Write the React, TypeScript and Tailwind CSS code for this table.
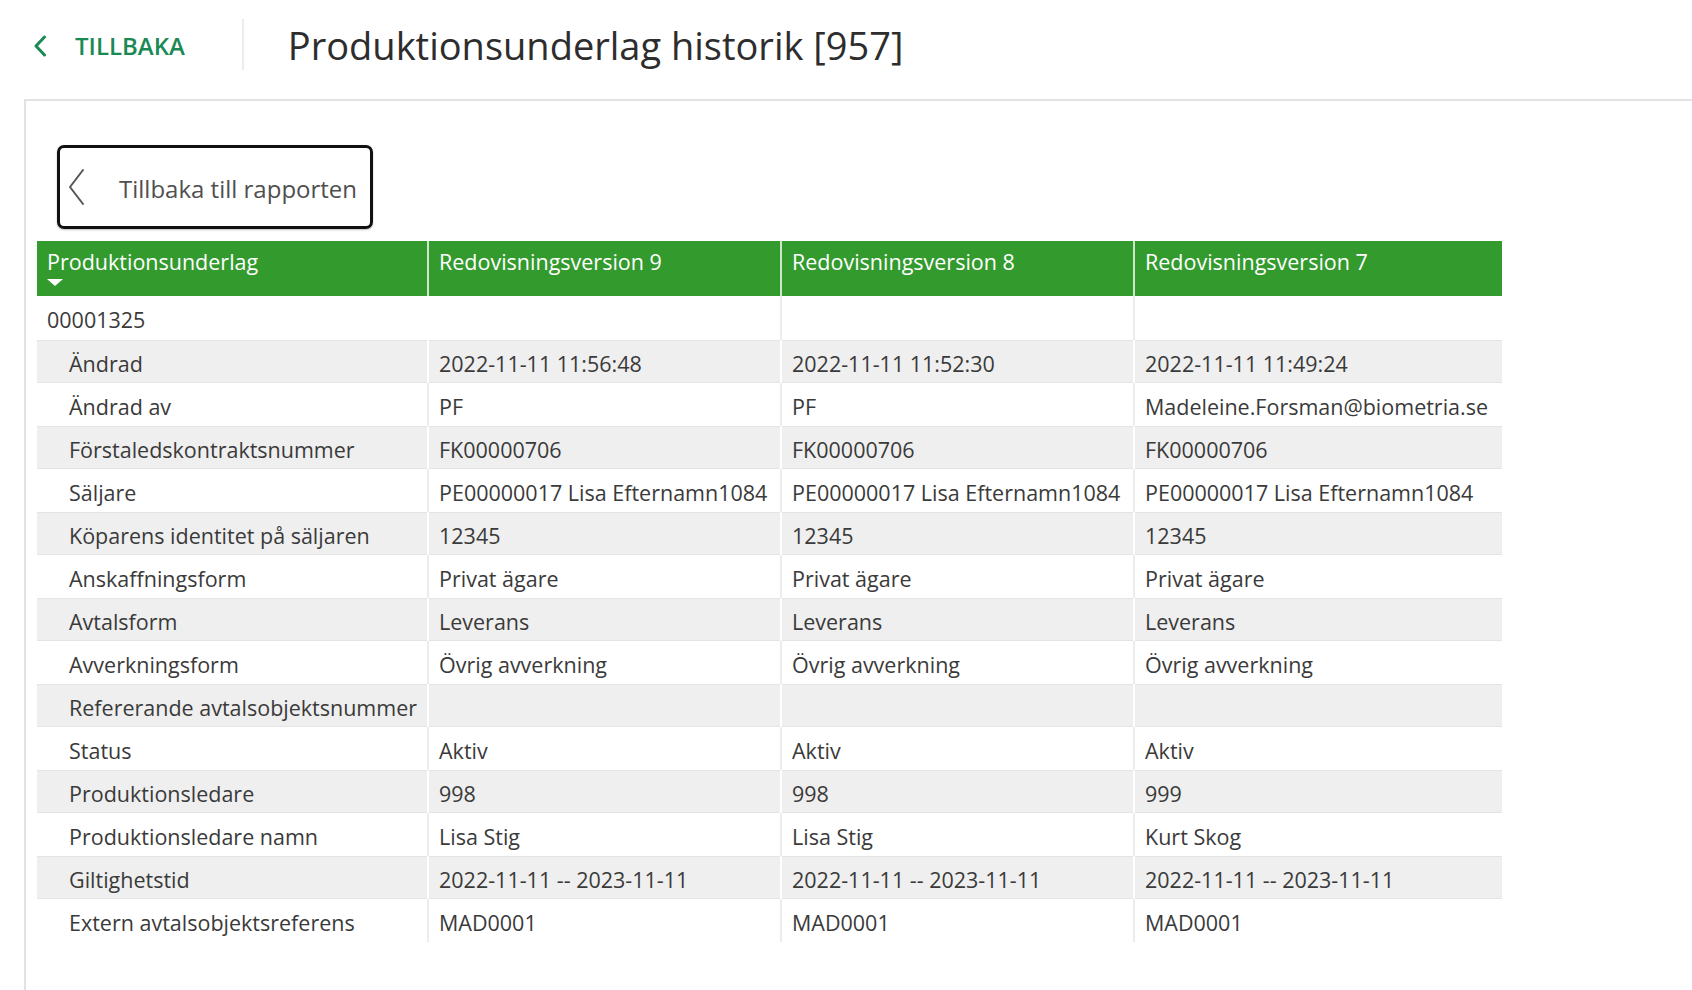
import { ReactNode } from "react";

type Row = { label: string; values: string[] };

const rows: Row[] = [
  { label: "Ändrad", values: ["2022-11-11 11:56:48", "2022-11-11 11:52:30", "2022-11-11 11:49:24"] },
  { label: "Ändrad av", values: ["PF", "PF", "Madeleine.Forsman@biometria.se"] },
  { label: "Förstaledskontraktsnummer", values: ["FK00000706", "FK00000706", "FK00000706"] },
  {
    label: "Säljare",
    values: ["PE00000017 Lisa Efternamn1084", "PE00000017 Lisa Efternamn1084", "PE00000017 Lisa Efternamn1084"],
  },
  { label: "Köparens identitet på säljaren", values: ["12345", "12345", "12345"] },
  { label: "Anskaffningsform", values: ["Privat ägare", "Privat ägare", "Privat ägare"] },
  { label: "Avtalsform", values: ["Leverans", "Leverans", "Leverans"] },
  { label: "Avverkningsform", values: ["Övrig avverkning", "Övrig avverkning", "Övrig avverkning"] },
  { label: "Refererande avtalsobjektsnummer", values: ["", "", ""] },
  { label: "Status", values: ["Aktiv", "Aktiv", "Aktiv"] },
  { label: "Produktionsledare", values: ["998", "998", "999"] },
  { label: "Produktionsledare namn", values: ["Lisa Stig", "Lisa Stig", "Kurt Skog"] },
  { label: "Giltighetstid", values: ["2022-11-11 -- 2023-11-11", "2022-11-11 -- 2023-11-11", "2022-11-11 -- 2023-11-11"] },
  { label: "Extern avtalsobjektsreferens", values: ["MAD0001", "MAD0001", "MAD0001"] },
];

const versions = ["Redovisningsversion 9", "Redovisningsversion 8", "Redovisningsversion 7"];

const cols = "grid grid-cols-[390px_353px_353px_369px]";

function Cell({ children, sep, className = "" }: { children?: ReactNode; sep?: string; className?: string }) {
  return (
    <div className={`flex items-center whitespace-nowrap overflow-hidden pt-[5px] ${sep ?? ""} ${className}`}>
      {children}
    </div>
  );
}

export default function App() {
  return (
    <div className="min-h-screen bg-white font-['Open_Sans',sans-serif] text-[#3a3a3a]">
      {/* Top bar */}
      <header className="flex items-center pt-[19px]">
        <button className="flex items-center gap-[28px] pl-[33px] pr-[57px] pt-[3px] text-[#1a8a55]">
          <svg width="14" height="22" viewBox="0 0 14 22" fill="none">
            <path d="M11.5 2 L3 11 L11.5 20" stroke="currentColor" strokeWidth="3" strokeLinecap="round" strokeLinejoin="round" />
          </svg>
          <span className="text-[24px] font-semibold leading-none">TILLBAKA</span>
        </button>
        <div className="h-[51px] w-[2px] bg-[#ececec]" />
        <h1 className="pl-[44px] text-[38px] leading-none text-[#2d2d2d]">Produktionsunderlag historik [957]</h1>
      </header>

      {/* Content panel */}
      <main className="ml-[24px] mt-[29px] min-h-[891px] border-l-2 border-t-2 border-[#e2e2e2] pl-[11px]">
        <button className="ml-[20px] mt-[44px] flex h-[84px] w-[316px] items-center rounded-[7px] border-[3px] border-[#111] pl-[6px] shadow-[0_1px_2px_rgba(0,0,0,0.25)]">
          <svg width="20" height="40" viewBox="0 0 20 40" fill="none">
            <path d="M17 3 L4 20 L17 37" stroke="#555" strokeWidth="2" strokeLinecap="round" strokeLinejoin="round" />
          </svg>
          <span className="ml-[33px] pt-[3px] text-[24px] text-[#4f4f4f]">Tillbaka till rapporten</span>
        </button>

        <div className="mt-[12px] w-[1465px] text-[21.5px]">
          {/* Header */}
          <div className={`${cols} h-[55px] bg-[#339a2e] text-white`}>
            <div className="relative px-[10px] pt-[5px]">
              Produktionsunderlag
              <span className="absolute left-[10px] top-[38px] h-0 w-0 border-x-[8px] border-t-[7px] border-x-transparent border-t-white" />
            </div>
            {versions.map((v) => (
              <div key={v} className="border-l-2 border-[#cfe6cb] px-[10px] pt-[5px]">
                {v}
              </div>
            ))}
          </div>

          {/* Group row */}
          <div className={`${cols} h-[44px]`}>
            <Cell className="px-[10px]">00001325</Cell>
            <Cell />
            <Cell sep="border-l-2 border-[#ececec]" />
            <Cell sep="border-l-2 border-[#ececec]" />
          </div>

          {rows.map((r, i) => {
            const gray = i % 2 === 0;
            const sep = gray ? "border-l-2 border-white" : "border-l-2 border-[#ececec]";
            return (
              <div
                key={r.label}
                className={`${cols} h-[43px] ${gray ? "bg-[#efefef] shadow-[inset_0_1px_0_#e4e4e4,inset_0_-1px_0_#e4e4e4]" : ""}`}
              >
                <Cell className="pl-[32px]">{r.label}</Cell>
                {r.values.map((v, j) => (
                  <Cell key={j} sep={sep} className="px-[10px]">
                    {v}
                  </Cell>
                ))}
              </div>
            );
          })}
        </div>
      </main>
    </div>
  );
}
